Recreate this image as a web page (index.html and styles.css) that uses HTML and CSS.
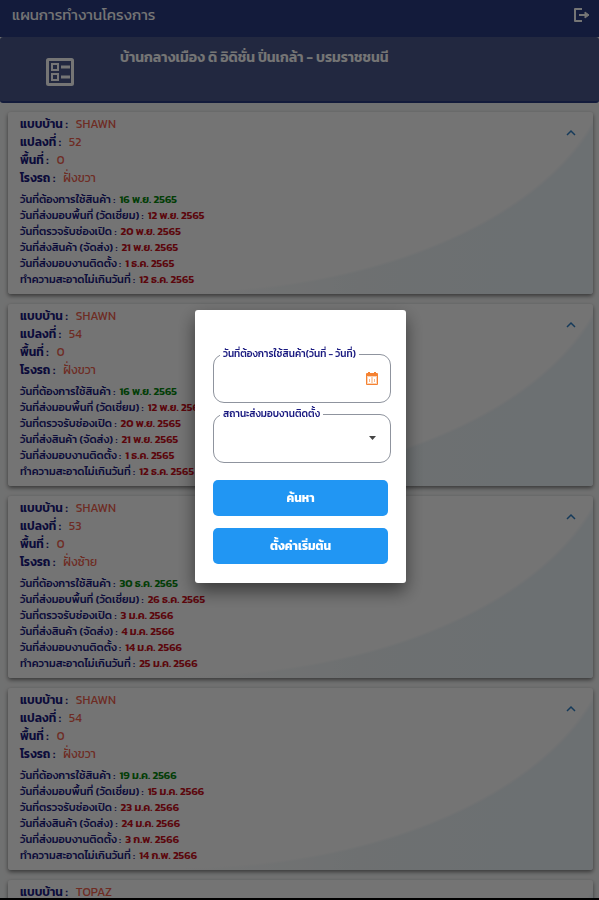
FILE: index.html
```html
<!DOCTYPE html>
<html lang="th">
<head>
    <meta charset="utf-8">
    <title>แผนการทำงานโครงการ</title>
    <meta name="viewport" content="width=device-width, initial-scale=1">
    <link rel="stylesheet" href="styles.css">
</head>
<body>
    <header class="topbar">
        <h1>แผนการทำงานโครงการ</h1>
        <button class="icon-button" type="button" aria-label="ออกจากระบบ">
            <svg width="18" height="16" viewBox="0 0 18 16" fill="none" stroke="#fff" stroke-width="2" stroke-linejoin="round">
                <path d="M9 2H2v12h7"/>
                <path d="M6 8h7"/>
                <path d="M12 5l4 3-4 3z" fill="#fff" stroke-width="1"/>
            </svg>
        </button>
    </header>

    <section class="project">
        <svg class="project-icon" width="28" height="28" viewBox="0 0 28 28" fill="none" stroke="#fff">
            <rect x="1.5" y="1.5" width="25" height="25" rx="1" stroke-width="3"/>
            <rect x="6" y="6" width="6" height="6" stroke-width="2"/>
            <rect x="6" y="16" width="6" height="6" stroke-width="2"/>
            <path d="M15 9h9M15 19h9" stroke-width="3"/>
        </svg>
        <h2>บ้านกลางเมือง ดิ อิดิชั่น ปิ่นเกล้า - บรมราชชนนี</h2>
    </section>

    <main class="cards" id="cards"></main>

    <div class="overlay">
        <form class="dialog" role="dialog">
            <div class="field">
                <label for="dateRange">วันที่ต้องการใช้สินค้า(วันที่ - วันที่)</label>
                <input type="text" id="dateRange">
                <svg class="field-icon" width="12" height="13" viewBox="0 0 12 13">
                    <path d="M1 1h10a1 1 0 0 1 1 1v10a1 1 0 0 1-1 1H1a1 1 0 0 1-1-1V2a1 1 0 0 1 1-1z" fill="#f58232"/>
                    <path d="M2 0h2v2H2zM8 0h2v2H8z" fill="#f58232"/>
                    <path d="M1 4h10v8H1z" fill="#fbd3b5"/>
                    <path d="M2 5h3v6H2zM7 5h3v6H7z" fill="#fff"/>
                    <path d="M3 7h1v3H3zM8 7h1v3H8z" fill="#f9b98c"/>
                </svg>
            </div>
            <div class="field">
                <label for="status">สถานะส่งมอบงานติดตั้ง</label>
                <select id="status"><option value=""></option></select>
                <svg class="field-icon" width="12" height="13" viewBox="0 0 12 13">
                    <path d="M3 4h7L6.500 8z" fill="#444"/>
                </svg>
            </div>
            <button class="btn" type="button">ค้นหา</button>
            <button class="btn" type="button">ตั้งค่าเริ่มต้น</button>
        </form>
    </div>

    <script src="script.js"></script>
</body>
</html>
```

FILE: styles.css
```css
* {
    box-sizing: border-box;
}

body {
    font-family: Kanit, Prompt, "Noto Sans Thai", "Noto Sans", sans-serif;
    background-color: #f5f6f6;
    color: #1a1a80;
    height: 100vh;
    margin: 0;
    overflow: hidden;
    border-bottom: 2px solid #000;
}

h1, h2, dl, dd {
    margin: 0;
}

.topbar {
    display: flex;
    justify-content: space-between;
    align-items: center;
    height: 37px;
    padding: 0 8px 7px 12px;
    background-color: #2a3c82;
    color: #fff;
}

.topbar h1 {
    font-size: 15px;
    line-height: 20px;
    font-weight: 400;
}

.icon-button {
    display: flex;
    padding: 0;
    border: none;
    background: none;
}

.project {
    display: flex;
    align-items: flex-start;
    gap: 46px;
    height: 66px;
    padding: 11px 46px;
    border-bottom: 2px solid #2a3c82;
    border-radius: 3px;
    background-color: #4a588b;
    color: #fff;
}

.project-icon {
    flex: none;
    margin-top: 10px;
}

.project h2 {
    font-size: 14px;
    line-height: 20px;
    font-weight: 600;
    white-space: nowrap;
}

.cards {
    display: flex;
    flex-direction: column;
    gap: 10px;
    padding: 9px 6px 0 8px;
}

.card {
    position: relative;
    padding: 3px 12px 7px;
    border-radius: 3px;
    background:
        radial-gradient(ellipse 75% 245px at 29% -63px, #fcfcfc 99%, transparent 100%),
        linear-gradient(to right, #fcfcfc 30%, #eff5f7 60%, #ebf3f8 90%);
    box-shadow: 0 2px 4px rgba(0, 0, 0, 0.5);
}

.row {
    display: flex;
    gap: 8px;
    white-space: nowrap;
}

.info .row {
    font-size: 12px;
    line-height: 18px;
}

.info dd {
    color: #f0604d;
}

.info dt {
    font-weight: 600;
}

.dates {
    margin-top: 4px;
}

.dates .row {
    gap: 4px;
    font-size: 11px;
    line-height: 16px;
    font-weight: 500;
}

.dates dd {
    color: #c8101c;
    font-weight: 600;
}

.dates .row:first-child dd {
    color: #07870f;
}

.toggle {
    position: absolute;
    top: 17px;
    right: 17px;
}

.overlay {
    position: fixed;
    inset: 0;
    display: flex;
    justify-content: center;
    align-items: center;
    padding: 0 0 8px 2px;
    background-color: rgba(0, 0, 0, 0.54);
}

.dialog {
    display: flex;
    flex-direction: column;
    width: 211px;
    padding: 44px 15px 19px 18px;
    border-radius: 3px;
    background-color: #fff;
    box-shadow: 0 8px 18px rgba(0, 0, 0, 0.5);
}

.field {
    position: relative;
    margin-bottom: 11px;
}

.field label {
    position: absolute;
    top: -7px;
    left: 7px;
    padding: 0 3px;
    background-color: #fff;
    font-size: 10px;
    line-height: 14px;
    font-weight: 500;
    white-space: nowrap;
}

.field input, .field select {
    display: block;
    width: 100%;
    height: 49px;
    padding: 0 30px 0 12px;
    border: 1px solid #8f949e;
    border-radius: 11px;
    background-color: #fff;
    font: inherit;
    font-size: 12px;
    appearance: none;
}

.field-icon {
    position: absolute;
    top: 18px;
    right: 13px;
    pointer-events: none;
}

.btn {
    height: 36px;
    margin: 6px 3px 6px 0;
    border: none;
    border-radius: 5px;
    background-color: #2196f3;
    color: #fff;
    font: inherit;
    font-size: 12px;
    font-weight: 700;
}

.btn:last-child {
    margin-bottom: 0;
}
```

FILE: script.js
```js
const infoLabels = ['แบบบ้าน :', 'แปลงที่ :', 'พื้นที่ :', 'โรงรถ :'];
const dateLabels = [
    'วันที่ต้องการใช้สินค้า :',
    'วันที่ส่งมอบพื้นที่ (วัดเชี่ยม) :',
    'วันที่ตรวจรับช่องเปิด :',
    'วันที่ส่งสินค้า (จัดส่ง) :',
    'วันที่ส่งมอบงานติดตั้ง :',
    'ทำความสะอาดไม่เกินวันที่ :'
];

const plots = [
    {
        info: ['SHAWN', '52', '0', 'ฝั่งขวา'],
        dates: ['16 พ.ย. 2565', '12 พ.ย. 2565', '20 พ.ย. 2565', '21 พ.ย. 2565', '1 ธ.ค. 2565', '12 ธ.ค. 2565']
    },
    {
        info: ['SHAWN', '54', '0', 'ฝั่งขวา'],
        dates: ['16 พ.ย. 2565', '12 พ.ย. 2565', '20 พ.ย. 2565', '21 พ.ย. 2565', '1 ธ.ค. 2565', '12 ธ.ค. 2565']
    },
    {
        info: ['SHAWN', '53', '0', 'ฝั่งซ้าย'],
        dates: ['30 ธ.ค. 2565', '26 ธ.ค. 2565', '3 ม.ค. 2566', '4 ม.ค. 2566', '14 ม.ค. 2566', '25 ม.ค. 2566']
    },
    {
        info: ['SHAWN', '54', '0', 'ฝั่งขวา'],
        dates: ['19 ม.ค. 2566', '15 ม.ค. 2566', '23 ม.ค. 2566', '24 ม.ค. 2566', '3 ก.พ. 2566', '14 ก.พ. 2566']
    },
    {
        info: ['TOPAZ'],
        dates: []
    }
];

function rows(labels, values) {
    return values.map((value, i) => `<div class="row"><dt>${labels[i]}</dt><dd>${value}</dd></div>`).join('');
}

document.getElementById('cards').innerHTML = plots.map(plot => `
    <article class="card">
        <dl class="info">${rows(infoLabels, plot.info)}</dl>
        <dl class="dates">${rows(dateLabels, plot.dates)}</dl>
        <button class="icon-button toggle" type="button" aria-label="ย่อ">
            <svg width="10" height="8" viewBox="0 0 10 8" fill="none" stroke="#2f7fc4" stroke-width="1.5">
                <path d="M1 6l4-4 4 4"/>
            </svg>
        </button>
    </article>`).join('');
```
